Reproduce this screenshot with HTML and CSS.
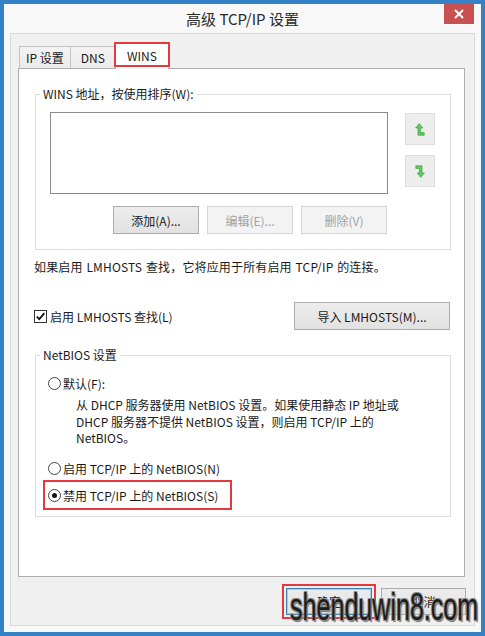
FILE: index.html
```html
<!DOCTYPE html>
<html>

<head>
    <meta charset="UTF-8">
    <title>高级 TCP/IP 设置</title>
    <link rel="stylesheet" href="styles.css">
</head>

<body>
<div class="window">
    <div class="titlebar">
        <span></span>
        <div class="title">高级 TCP/IP 设置</div>
        <button class="close-button">
            <svg width="10" height="10" viewBox="0 0 10 10"><path d="M1 1 L9 9 M9 1 L1 9" stroke="#fff" stroke-width="2" fill="none"/></svg>
        </button>
    </div>

    <div class="client">
        <div class="tabs">
            <div class="tab">IP 设置</div>
            <div class="tab">DNS</div>
            <div class="tab active">WINS</div>
        </div>

        <div class="panel">
            <fieldset class="group wins-group">
                <legend>WINS 地址，按使用排序(W):</legend>
                <div class="wins-body">
                    <div class="list-col">
                        <div class="listbox"></div>
                        <div class="button-row">
                            <button class="btn">添加(A)...</button>
                            <button class="btn" disabled>编辑(E)...</button>
                            <button class="btn" disabled>删除(V)</button>
                        </div>
                    </div>
                    <div class="move-col">
                        <button class="move-button">
                            <svg width="10" height="13" viewBox="0 0 10 13"><path d="M0.6 5 L4.2 0.6 L7.8 5 L5.6 5 L5.6 9.6 L9.2 9.6 L9.2 12.2 L3 12.2 L3 5 Z" fill="#63c763" stroke="#41a841" stroke-width="0.7"/></svg>
                        </button>
                        <button class="move-button">
                            <svg width="10" height="13" viewBox="0 0 10 13"><path d="M0.8 0.8 L7 0.8 L7 8 L9.4 8 L5.8 12.4 L2.2 8 L4.4 8 L4.4 3.4 L0.8 3.4 Z" fill="#63c763" stroke="#41a841" stroke-width="0.7"/></svg>
                        </button>
                    </div>
                </div>
            </fieldset>

            <p class="note">如果启用 LMHOSTS 查找，它将应用于所有启用 TCP/IP 的连接。</p>

            <div class="lm-row">
                <label class="check">
                    <span class="check-box">
                        <svg width="11" height="11" viewBox="0 0 11 11"><path d="M1.8 5.6 L4.3 8.2 L9.4 2.2" stroke="#111" stroke-width="1.8" fill="none"/></svg>
                    </span>
                    启用 LMHOSTS 查找(L)
                </label>
                <button class="btn import-button">导入 LMHOSTS(M)...</button>
            </div>

            <fieldset class="group netbios-group">
                <legend>NetBIOS 设置</legend>
                <div class="radio"><span class="radio-dot"></span>默认(F):</div>
                <p class="radio-desc">从 DHCP 服务器使用 NetBIOS 设置。如果使用静态 IP 地址或<br>DHCP 服务器不提供 NetBIOS 设置，则启用 TCP/IP 上的<br>NetBIOS。</p>
                <div class="radio second"><span class="radio-dot"></span>启用 TCP/IP 上的 NetBIOS(N)</div>
                <div class="marked-box">
                    <div class="radio"><span class="radio-dot checked"></span>禁用 TCP/IP 上的 NetBIOS(S)</div>
                </div>
            </fieldset>
        </div>

        <div class="footer">
            <button class="btn ok-button">确定</button>
            <button class="btn cancel-button">取消</button>
        </div>
    </div>

    <div class="watermark">shenduwin8.com</div>
</div>
</body>
</html>
```

FILE: styles.css
```css
body {
    margin: 0;
    background-color: #fff;
    font-family: "Noto Sans CJK SC", sans-serif;
    font-size: 12px;
    color: #1a1a1a;
}

.window {
    position: relative;
    display: flex;
    flex-direction: column;
    width: 485px;
    height: 636px;
    box-sizing: border-box;
    border: 4px solid #3481c7;
    background-color: #f8f8f8;
    overflow: hidden;
}

.titlebar {
    display: grid;
    grid-template-columns: 1fr auto 1fr;
    height: 29px;
}

.title {
    font-size: 15px;
    line-height: 29px;
    color: #2a2a2a;
}

.close-button {
    justify-self: end;
    display: flex;
    align-items: center;
    justify-content: center;
    width: 30px;
    height: 20px;
    margin-right: 7px;
    padding: 0;
    border: none;
    background-color: #c75050;
}

.client {
    display: flex;
    flex-direction: column;
    height: 593px;
    box-sizing: border-box;
    margin: 0 6px;
    border: 1px solid #dadada;
    background-color: #f0f0f0;
}

/* tabs */
.tabs {
    display: flex;
    align-items: flex-end;
    height: 25px;
    margin-top: 9px;
    padding-left: 8px;
}

.tab {
    height: 22px;
    box-sizing: border-box;
    padding: 0 6px;
    border: 1px solid #c4c4c4;
    border-bottom: none;
    background: linear-gradient(#f3f3f3, #ebebeb);
    line-height: 21px;
}

.tab + .tab {
    margin-left: -1px;
}

.tab:nth-child(2) {
    padding: 0 10px;
}

.tab.active {
    position: relative;
    z-index: 1;
    height: 26px;
    margin-bottom: -1px;
    padding: 0 11px;
    border-color: #adadad;
    background: #fff;
    line-height: 24px;
}

.tab.active::after {
    content: "";
    position: absolute;
    left: -2px;
    right: -2px;
    top: -2px;
    bottom: 2px;
    border: 2px solid #e5393f;
}

.panel {
    height: 509px;
    box-sizing: border-box;
    margin: 0 9px 0 7px;
    padding: 0 13px 0 15px;
    border: 1px solid #adadad;
    background-color: #fff;
}

/* group boxes */
.group {
    margin: 17px 0 0 1px;
    padding: 10px 0 15px 0;
    border: 1px solid #dcdcdc;
    min-width: 0;
}

.group legend {
    margin-left: 4px;
    padding: 0 3px;
    line-height: 16px;
}

.wins-body {
    display: flex;
    gap: 17px;
    margin-left: 14px;
}

.list-col {
    width: 338px;
}

.listbox {
    height: 82px;
    box-sizing: border-box;
    border: 1px solid #8b8c8e;
    background-color: #fff;
}

.button-row {
    display: flex;
    justify-content: flex-end;
    gap: 8px;
    margin-top: 12px;
    padding-right: 1px;
}

.btn {
    width: 86px;
    height: 28px;
    padding: 0;
    border: 1px solid #acacac;
    background: linear-gradient(#ececec, #e2e2e2);
    font-family: inherit;
    font-size: 12px;
    color: #1a1a1a;
}

.btn:disabled {
    border-color: #d5d5d5;
    background: #f3f3f3;
    color: #a2a2a2;
}

.move-col {
    display: flex;
    flex-direction: column;
    gap: 10px;
    padding-top: 1px;
}

.move-button {
    display: flex;
    align-items: center;
    justify-content: center;
    width: 30px;
    height: 32px;
    padding: 0;
    border: 1px solid #dedede;
    background-color: #ededed;
}

.note {
    margin: 9px 0 0;
    line-height: 16px;
    word-spacing: 1px;
    letter-spacing: 0.15px;
}

.lm-row {
    display: flex;
    align-items: center;
    justify-content: space-between;
    height: 28px;
    margin-top: 27px;
    padding-right: 1px;
}

.check {
    display: flex;
    align-items: center;
    gap: 3px;
}

.check-box {
    display: flex;
    align-items: center;
    justify-content: center;
    width: 13px;
    height: 13px;
    box-sizing: border-box;
    border: 1px solid #333;
    background-color: #fff;
}

.import-button {
    width: 156px;
}

/* netbios */
.netbios-group {
    padding: 12px 0 6px 0;
}

.radio {
    display: flex;
    align-items: center;
    gap: 2px;
    height: 16px;
    margin-left: 12px;
}

.radio-dot {
    position: relative;
    width: 13px;
    height: 13px;
    box-sizing: border-box;
    border: 1px solid #444;
    border-radius: 50%;
    background-color: #fff;
}

.radio-dot.checked::after {
    content: "";
    position: absolute;
    left: 3px;
    top: 3px;
    width: 5px;
    height: 5px;
    border-radius: 50%;
    background-color: #111;
}

.radio-desc {
    margin: 6px 0 0 40px;
    line-height: 16.5px;
}

.radio.second {
    margin-top: 14px;
}

.marked-box {
    width: fit-content;
    margin: 3px 0 0 7px;
    padding: 6px 12px 4px 3px;
    border: 2px solid #e5393f;
}

.marked-box .radio {
    margin-left: 0;
}

/* dialog buttons */
.footer {
    display: flex;
    justify-content: flex-end;
    gap: 9px;
    margin-top: 11px;
    padding-right: 8px;
}

.footer .btn {
    height: 27px;
}

.ok-button {
    border-color: #3c7fb1;
    box-shadow: inset 0 0 0 1px #a6cdef;
    outline: 2px solid #e5393f;
    outline-offset: 2px;
}

.cancel-button {
    width: 85px;
}

.watermark {
    position: absolute;
    left: 286px;
    top: 584px;
    font-family: "Liberation Sans", sans-serif;
    font-size: 38px;
    line-height: 38px;
    color: #1c1c1c;
    white-space: nowrap;
    transform: scaleX(0.66);
    transform-origin: left top;
    text-shadow: 1px 1px 0 #8c8c8c, -1px -1px 0 #8c8c8c, 1px -1px 0 #8c8c8c, -1px 1px 0 #8c8c8c, 2px 2px 1px #777;
}
```
